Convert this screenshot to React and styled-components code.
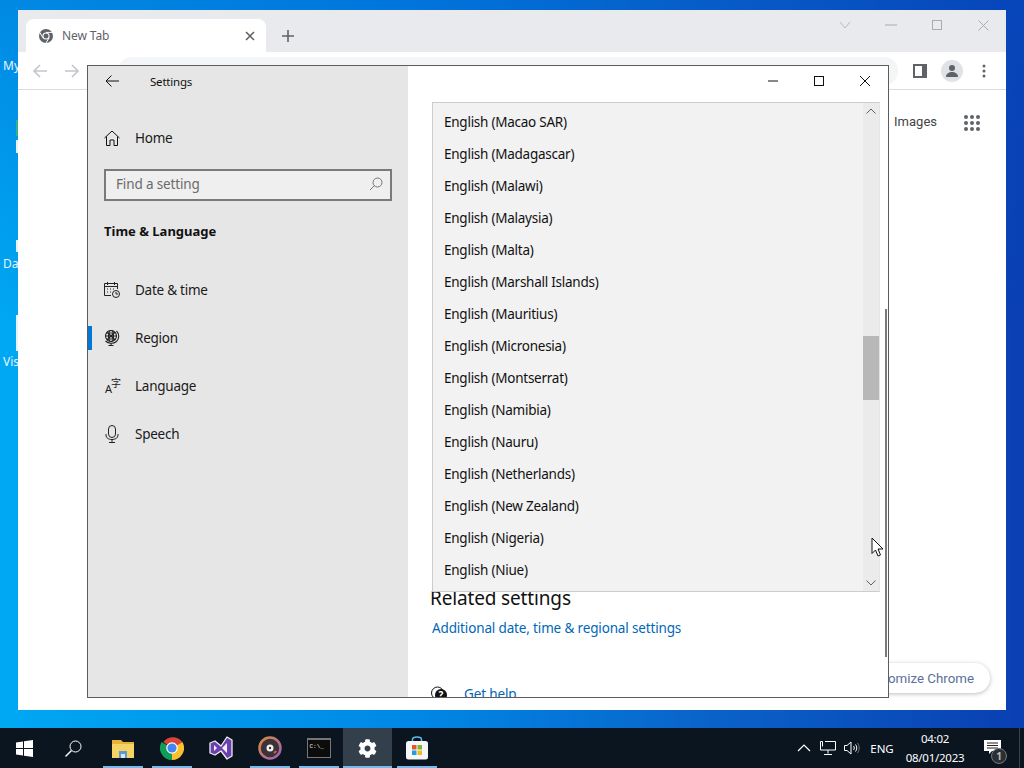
import React from 'react'
import styled, { createGlobalStyle } from 'styled-components'
import { FaCog } from 'react-icons/fa'

const UI_FONT = '"Noto Sans", "Open Sans", sans-serif'

const regions = [
    'Macao SAR', 'Madagascar', 'Malawi', 'Malaysia', 'Malta', 'Marshall Islands', 'Mauritius', 'Micronesia',
    'Montserrat', 'Namibia', 'Nauru', 'Netherlands', 'New Zealand', 'Nigeria', 'Niue',
]

function App() {
    return (
        <Screen>
            <GlobalStyle />
            <Desktop>
                <DesktopLabel $top={58}>My</DesktopLabel>
                <DesktopLabel $top={256}>Da</DesktopLabel>
                <DesktopLabel $top={354}>Vis</DesktopLabel>
                <DesktopSliver $top={120} $height={16} $color="#35b08a" />
                <DesktopSliver $top={140} $height={13} />
                <DesktopSliver $top={240} $height={12} />
                <DesktopSliver $top={315} $height={36} />

                <ChromeWindow>
                    <TabStrip>
                        <Tab>
                            <ChromeGlyph />
                            <TabTitle>New Tab</TabTitle>
                            <svg width="10" height="10" viewBox="0 0 10 10"><path d="M1 1l8 8M9 1l-8 8" stroke="#5f6368" strokeWidth="1.6" /></svg>
                        </Tab>
                        <NewTab>
                            <svg width="12" height="12" viewBox="0 0 12 12"><path d="M6 0v12M0 6h12" stroke="#5f6368" strokeWidth="1.6" /></svg>
                        </NewTab>
                        <ChromeControls>
                            <ChromeControl><svg width="12" height="8" viewBox="0 0 12 8"><path d="M1 1l5 6 5-6" fill="none" stroke="#b9bcc1" /></svg></ChromeControl>
                            <ChromeControl><svg width="12" height="2" viewBox="0 0 12 2"><path d="M0 1h12" stroke="#a9acb1" /></svg></ChromeControl>
                            <ChromeControl><svg width="10" height="10" viewBox="0 0 10 10"><rect x=".5" y=".5" width="9" height="9" fill="none" stroke="#a9acb1" /></svg></ChromeControl>
                            <ChromeControl><svg width="11" height="11" viewBox="0 0 11 11"><path d="M.5.5l10 10M10.5.5l-10 10" stroke="#a9acb1" /></svg></ChromeControl>
                        </ChromeControls>
                    </TabStrip>
                    <Toolbar>
                        <NavArrow>
                            <svg width="16" height="14" viewBox="0 0 16 14"><path d="M15 7H2M8 1L2 7l6 6" fill="none" stroke="#c4c7cb" strokeWidth="1.7" /></svg>
                        </NavArrow>
                        <NavArrow>
                            <svg width="16" height="14" viewBox="0 0 16 14"><path d="M1 7h13M8 1l6 6-6 6" fill="none" stroke="#c4c7cb" strokeWidth="1.7" /></svg>
                        </NavArrow>
                        <Omnibox />
                        <ToolButton>
                            <svg width="14" height="14" viewBox="0 0 14 14"><path fillRule="evenodd" d="M0 0h14v14H0zM2 2v10h7V2z" fill="#5f6368" /></svg>
                        </ToolButton>
                        <ToolButton>
                            <Avatar>
                                <svg width="14" height="14" viewBox="0 0 14 14"><circle cx="7" cy="4" r="3" fill="#5f6368" /><path d="M1 13c0-3.500 3-5 6-5s6 1.500 6 5z" fill="#5f6368" /></svg>
                            </Avatar>
                        </ToolButton>
                        <ToolButton>
                            <svg width="4" height="14" viewBox="0 0 4 14"><circle cx="2" cy="2" r="1.500" fill="#5f6368" /><circle cx="2" cy="7" r="1.500" fill="#5f6368" /><circle cx="2" cy="12" r="1.500" fill="#5f6368" /></svg>
                        </ToolButton>
                    </Toolbar>
                    <NewTabPage>
                        <TopLinks>
                            <TopLink>Images</TopLink>
                            <AppsGrid>
                                {Array.from({ length: 9 }).map((_, i) => <AppsDot key={i} />)}
                            </AppsGrid>
                        </TopLinks>
                        <CustomizeButton>Customize Chrome</CustomizeButton>
                    </NewTabPage>
                </ChromeWindow>

                <SettingsWindow>
                    <Sidebar>
                        <SidebarTitle>
                            <BackButton>
                                <svg width="14" height="12" viewBox="0 0 14 12"><path d="M14 6H1M6.500.5L1 6l5.500 5.500" fill="none" stroke="#111" /></svg>
                            </BackButton>
                            <span>Settings</span>
                        </SidebarTitle>
                        <HomeRow>
                            <NavIcon>
                                <svg width="16" height="16" viewBox="0 0 16 16"><path d="M.5 8L8 1l7.500 7M2.500 6.500v9h3.500V10h4v5.500h3.500v-9" fill="none" stroke="#111" /></svg>
                            </NavIcon>
                            <span>Home</span>
                        </HomeRow>
                        <SearchBox>
                            <span>Find a setting</span>
                            <svg width="14" height="14" viewBox="0 0 14 14"><circle cx="8.500" cy="5.500" r="4.500" fill="none" stroke="#777" /><path d="M5.500 8.500L1 13" stroke="#777" /></svg>
                        </SearchBox>
                        <SectionTitle>Time &amp; Language</SectionTitle>
                        <NavRow>
                            <NavIcon>
                                <svg width="16" height="16" viewBox="0 0 16 16" fill="none" stroke="#222">
                                    <path d="M7 13.500H.5V1.500h13V7M.5 4.500h13M3.500 0v3M10.500 0v3" />
                                    <path d="M3 7h1M6 7h1M9 7h1M3 10h1M6 10h1" />
                                    <circle cx="12" cy="12" r="3.500" />
                                    <path d="M12 10v2h2" />
                                </svg>
                            </NavIcon>
                            <span>Date &amp; time</span>
                        </NavRow>
                        <NavRow $active>
                            <NavIcon>
                                <svg width="16" height="16" viewBox="0 0 16 16" fill="none" stroke="#222" strokeWidth="1.1">
                                    <circle cx="7" cy="6" r="5.500" />
                                    <ellipse cx="7" cy="6" rx="2.500" ry="5.500" />
                                    <path d="M1.500 6h11M2.500 3h9M2.500 9h9M3 2l8 8M11 2l-8 8M12.500 1c3 3 3 7.500 0 10.500M1.500 11c3 3 8 3 11 .5M7 13v2.500M4.500 15.500h5" />
                                </svg>
                            </NavIcon>
                            <span>Region</span>
                        </NavRow>
                        <NavRow>
                            <NavIcon>
                                <LangA>A</LangA>
                                <LangZi>字</LangZi>
                            </NavIcon>
                            <span>Language</span>
                        </NavRow>
                        <NavRow>
                            <NavIcon>
                                <svg width="16" height="18" viewBox="0 0 16 18" fill="none" stroke="#222">
                                    <rect x="4.500" y=".5" width="7" height="12" rx="3.500" />
                                    <path d="M2 9v1c0 3 2.500 4.500 6 4.500s6-1.500 6-4.500V9M8 14.500v3M5 17.500h6" />
                                </svg>
                            </NavIcon>
                            <span>Speech</span>
                        </NavRow>
                    </Sidebar>

                    <Main>
                        <MainBar>
                            <WinButton><svg width="10" height="10" viewBox="0 0 10 10"><path d="M0 5h10" stroke="#111" /></svg></WinButton>
                            <WinButton><svg width="10" height="10" viewBox="0 0 10 10"><rect x=".5" y=".5" width="9" height="9" fill="none" stroke="#111" /></svg></WinButton>
                            <WinButton><svg width="10" height="10" viewBox="0 0 10 10"><path d="M0 0l10 10M10 0L0 10" stroke="#111" /></svg></WinButton>
                        </MainBar>
                        <RelatedTitle>Related settings</RelatedTitle>
                        <BlueLink>Additional date, time &amp; regional settings</BlueLink>
                        <HelpRow>
                            <svg width="16" height="16" viewBox="0 0 16 16"><circle cx="6.500" cy="7" r="6" fill="none" stroke="#111" /><circle cx="10" cy="9" r="6" fill="#111" /><text x="10" y="12.500" fontSize="10" fontWeight="700" textAnchor="middle" fill="#fff" fontFamily="Noto Sans">?</text></svg>
                            <BlueLink>Get help</BlueLink>
                        </HelpRow>

                        <PageScrollbar />

                        <RegionDropdown>
                            <RegionList>
                                {regions.map(name => <RegionItem key={name}>English ({name})</RegionItem>)}
                            </RegionList>
                            <ListScrollbar>
                                <ScrollArrow>
                                    <svg width="10" height="6" viewBox="0 0 10 6"><path d="M.5 5.500L5 1l4.500 4.500" fill="none" stroke="#606060" /></svg>
                                </ScrollArrow>
                                <ScrollThumb />
                                <ScrollArrow>
                                    <svg width="10" height="6" viewBox="0 0 10 6"><path d="M.5.5L5 5 9.500.5" fill="none" stroke="#606060" /></svg>
                                </ScrollArrow>
                            </ListScrollbar>
                        </RegionDropdown>
                    </Main>
                </SettingsWindow>

                <Cursor width="15" height="21" viewBox="0 0 15 21">
                    <path d="M1 1v15.500l3.500-3.500 2.500 6 2.500-1-2.500-6h5z" fill="#fff" stroke="#111" />
                </Cursor>
            </Desktop>

            <Taskbar>
                <TaskButton>
                    <svg width="17" height="17" viewBox="0 0 17 17" fill="#fff"><path d="M0 2.500l7-1V8H0zM8 1.300L17 0v8H8zM0 9h7v6.500l-7-1zM8 9h9v8l-9-1.300z" /></svg>
                </TaskButton>
                <TaskButton>
                    <svg width="17" height="17" viewBox="0 0 17 17" fill="none" stroke="#fff"><circle cx="10.500" cy="6.500" r="5.500" /><path d="M6.500 10.500L.5 16.500" strokeWidth="1.400" /></svg>
                </TaskButton>
                <TaskApp $running>
                    <svg width="22" height="19" viewBox="0 0 22 19">
                        <path d="M0 1h9l2 2h11v16H0z" fill="#e8b23a" />
                        <path d="M0 5h22v14H0z" fill="#f6d365" />
                        <path d="M7 12h8v7H7z" fill="#5a9ccf" />
                        <path d="M9 15h4v4H9z" fill="#d8e6ee" />
                    </svg>
                </TaskApp>
                <TaskApp $running>
                    <svg width="24" height="24" viewBox="0 0 24 24">
                        <path d="M12 12L3.300 6A12 12 0 0 1 22.400 6z" fill="#db4437" />
                        <path d="M12 12l10.400-6A12 12 0 0 1 12 24z" fill="#fbc02d" />
                        <path d="M12 12v12A12 12 0 0 1 1.600 6z" fill="#0f9d58" />
                        <circle cx="12" cy="12" r="5.800" fill="#fff" />
                        <circle cx="12" cy="12" r="4.600" fill="#4285f4" />
                    </svg>
                </TaskApp>
                <TaskApp>
                    <svg width="24" height="24" viewBox="0 0 24 24">
                        <path d="M1 7l5-2 6 5 6-9 5 3v16l-5 3-6-8-6 4-5-2z" fill="#6a3fb0" stroke="#eee" strokeWidth="1.300" strokeLinejoin="round" />
                        <path d="M5 9v6l3-3zM18 7l-5 5 5 5z" fill="#f3eefa" />
                    </svg>
                </TaskApp>
                <TaskApp $running>
                    <svg width="24" height="24" viewBox="0 0 24 24">
                        <defs>
                            <linearGradient id="discRing" x1="0" y1="0" x2="1" y2="1">
                                <stop offset="0" stopColor="#e08a3c" />
                                <stop offset="1" stopColor="#9a5fc0" />
                            </linearGradient>
                        </defs>
                        <circle cx="12" cy="12" r="10.500" fill="#3b3338" stroke="url(#discRing)" strokeWidth="2.500" />
                        <circle cx="12" cy="12" r="3.500" fill="#f1f1f1" />
                        <circle cx="12" cy="12" r="1.200" fill="#333" />
                        <path d="M16 17a6 6 0 0 0 2-2" stroke="#d06a3a" strokeWidth="2" fill="none" />
                    </svg>
                </TaskApp>
                <TaskApp $running>
                    <ConsoleIcon>C:\_</ConsoleIcon>
                </TaskApp>
                <TaskApp $running $active>
                    <FaCog size={19} color="#fff" />
                </TaskApp>
                <TaskApp $running>
                    <svg width="24" height="24" viewBox="0 0 24 24">
                        <path d="M7.500 6V3.500C7.500 1.500 9 1 12 1s4.500.5 4.500 2.500V6" fill="none" stroke="#62b6e6" strokeWidth="1.500" />
                        <rect x="1" y="5" width="22" height="18.500" rx="2.500" fill="#f4f6f8" />
                        <rect x="7" y="9" width="4.500" height="4.500" fill="#e8552d" />
                        <rect x="12.500" y="9" width="4.500" height="4.500" fill="#7db82c" />
                        <rect x="7" y="14.500" width="4.500" height="4.500" fill="#1f9fe0" />
                        <rect x="12.500" y="14.500" width="4.500" height="4.500" fill="#f7b916" />
                    </svg>
                </TaskApp>
                <Tray>
                    <TrayIcon>
                        <svg width="14" height="8" viewBox="0 0 14 8"><path d="M1 7l6-6 6 6" fill="none" stroke="#fff" strokeWidth="1.200" /></svg>
                    </TrayIcon>
                    <TrayIcon>
                        <svg width="16" height="14" viewBox="0 0 16 14" fill="none" stroke="#fff"><path d="M5 .5h10.500v8.500H.5V.5h2v5M8 9v3.500M4 13.500h8" /></svg>
                    </TrayIcon>
                    <TrayIcon>
                        <svg width="16" height="14" viewBox="0 0 16 14" fill="none" stroke="#fff"><path d="M.5 4.500h2.500L7 1v12L3 9.500H.5zM9.500 5c1 1 1 3 0 4M11.500 3.500c1.700 2 1.700 5 0 7" /><path d="M13.500 2c2.300 3 2.300 7 0 10" stroke="#777" /></svg>
                    </TrayIcon>
                    <TrayLang>ENG</TrayLang>
                    <Clock>
                        <span>04:02</span>
                        <span>08/01/2023</span>
                    </Clock>
                    <Notifications>
                        <svg width="17" height="14" viewBox="0 0 17 14"><path d="M0 0h17v11H8l-3 3v-3H0z" fill="#fff" /><path d="M3 3h11M3 5.500h11M3 8h11" stroke="#222" /></svg>
                        <NotifyBadge>1</NotifyBadge>
                    </Notifications>
                    <ShowDesktop />
                </Tray>
            </Taskbar>
        </Screen>
    )
}

function ChromeGlyph() {
    return (
        <svg width="14" height="14" viewBox="0 0 14 14">
            <circle cx="7" cy="7" r="7" fill="#5f6368" />
            <circle cx="7" cy="7" r="3.600" fill="#fff" />
            <circle cx="7" cy="7" r="2.500" fill="#5f6368" />
            <path d="M7 3.400h6.400M3.900 8.800L.9 3.400M10.100 8.800L7 14" stroke="#fff" strokeWidth="1" />
        </svg>
    )
}

export default App

const GlobalStyle = createGlobalStyle`
    html, body {
        margin: 0;
        padding: 0;
        overflow: hidden;
    }
`

const Screen = styled.div`
    width: 1024px;
    height: 768px;
    display: flex;
    flex-direction: column;
    overflow: hidden;
    font-family: ${UI_FONT};
`

const Desktop = styled.div`
    position: relative;
    flex: 1;
    background:
        linear-gradient(180deg, rgba(0, 80, 200, 0.35) 0, rgba(0, 80, 200, 0) 45%),
        linear-gradient(90deg, #00a8f2 0, #0088e6 40%, #0a62c8 70%, #0a3fb2 100%);
`

const DesktopLabel = styled.div`
    position: absolute;
    left: 3px;
    top: ${p => p.$top}px;
    font-size: 12px;
    line-height: 16px;
    color: #e8f6ff;
`

const DesktopSliver = styled.div`
    position: absolute;
    left: 16px;
    top: ${p => p.$top}px;
    width: 2px;
    height: ${p => p.$height}px;
    background: ${p => p.$color || '#e6f2f8'};
`

const ChromeWindow = styled.div`
    position: absolute;
    left: 18px;
    top: 10px;
    width: 988px;
    height: 700px;
    display: flex;
    flex-direction: column;
    background: #fff;
`

const TabStrip = styled.div`
    height: 42px;
    display: flex;
    align-items: flex-end;
    padding-left: 8px;
    background: #e8eaed;
`

const Tab = styled.div`
    width: 240px;
    height: 33px;
    box-sizing: border-box;
    display: flex;
    align-items: center;
    padding: 0 11px 0 13px;
    background: #fff;
    border-radius: 8px 8px 0 0;
`

const TabTitle = styled.span`
    flex: 1;
    margin-left: 9px;
    font-size: 12px;
    letter-spacing: -0.1px;
    color: #5f6368;
`

const NewTab = styled.div`
    width: 44px;
    height: 33px;
    display: flex;
    align-items: center;
    justify-content: center;
`

const ChromeControls = styled.div`
    margin-left: auto;
    align-self: flex-start;
    display: flex;
`

const ChromeControl = styled.div`
    width: 46px;
    height: 30px;
    display: flex;
    align-items: center;
    justify-content: center;
`

const Toolbar = styled.div`
    height: 38px;
    box-sizing: border-box;
    display: flex;
    align-items: center;
    padding: 0 6px;
    border-bottom: 1px solid #dadce0;
`

const NavArrow = styled.div`
    width: 32px;
    display: flex;
    justify-content: center;
`

const Omnibox = styled.div`
    flex: 1;
    height: 28px;
    margin: 0 6px 0 30px;
    border-radius: 14px;
    background: #f4f5f6;
`

const ToolButton = styled.div`
    width: 32px;
    height: 32px;
    display: flex;
    align-items: center;
    justify-content: center;
`

const Avatar = styled.div`
    width: 22px;
    height: 22px;
    border-radius: 50%;
    background: #e0e2e6;
    display: flex;
    align-items: center;
    justify-content: center;
`

const NewTabPage = styled.div`
    flex: 1;
    display: flex;
    flex-direction: column;
    justify-content: space-between;
    align-items: flex-end;
    padding: 24px 16px 17px 0;
`

const TopLinks = styled.div`
    display: flex;
    align-items: center;
    gap: 27px;
    padding-right: 10px;
`

const TopLink = styled.span`
    padding-bottom: 2px;
    font-family: "Roboto", sans-serif;
    font-size: 13px;
    color: #444;
`

const AppsGrid = styled.div`
    display: grid;
    grid-template-columns: repeat(3, 4px);
    gap: 2px;
`

const AppsDot = styled.span`
    width: 4px;
    height: 4px;
    border-radius: 50%;
    background: #5f6368;
`

const CustomizeButton = styled.div`
    height: 30px;
    display: flex;
    align-items: center;
    padding: 0 16px;
    border-radius: 15px;
    background: #fff;
    box-shadow: 0 1px 4px rgba(60, 64, 67, 0.35);
    font-family: "Roboto", sans-serif;
    font-size: 13.3px;
    color: #5b6f9c;
`

const SettingsWindow = styled.div`
    position: absolute;
    left: 87px;
    top: 65px;
    width: 802px;
    height: 633px;
    box-sizing: border-box;
    display: flex;
    overflow: hidden;
    background: #fff;
    border: 1px solid #5c5c5c;
`

const Sidebar = styled.div`
    width: 320px;
    display: flex;
    flex-direction: column;
    background: #e6e6e6;
    color: #111;
`

const SidebarTitle = styled.div`
    height: 32px;
    box-sizing: border-box;
    padding-bottom: 2px;
    display: flex;
    align-items: center;
    font-size: 11.5px;
    letter-spacing: -0.2px;
`

const BackButton = styled.div`
    width: 62px;
    padding-left: 17px;
    box-sizing: border-box;
    display: flex;
`

const NavRow = styled.div`
    position: relative;
    height: 48px;
    box-sizing: border-box;
    display: flex;
    align-items: center;
    padding-left: 16px;
    font-size: 13.5px;
    letter-spacing: -0.25px;
    color: #1a1a1a;

    ${p => p.$active && `
        &::before {
            content: '';
            position: absolute;
            left: 0;
            top: 12px;
            width: 4px;
            height: 24px;
            background: #0078d7;
        }
    `}
`

const HomeRow = styled(NavRow)`
    margin-top: 16px;
`

const NavIcon = styled.div`
    position: relative;
    width: 31px;
    height: 18px;
    display: flex;
    align-items: center;
`

const LangA = styled.span`
    position: absolute;
    left: 1px;
    top: 6px;
    font-size: 11px;
    line-height: 12px;
`

const LangZi = styled.span`
    position: absolute;
    left: 7px;
    top: 0;
    font-family: "Noto Sans CJK SC", sans-serif;
    font-size: 10px;
    line-height: 11px;
`

const SearchBox = styled.div`
    height: 32px;
    margin: 7px 16px 0;
    box-sizing: border-box;
    display: flex;
    align-items: center;
    justify-content: space-between;
    padding: 0 7px 2px 10px;
    border: 2px solid #7a7a7a;
    background: #efefef;
    font-size: 13.5px;
    letter-spacing: -0.15px;
    color: #6b6b6b;
`

const SectionTitle = styled.div`
    height: 30px;
    margin: 15px 16px 20px;
    display: flex;
    align-items: center;
    font-size: 13px;
    font-weight: 700;
`

const Main = styled.div`
    position: relative;
    flex: 1;
    display: flex;
    flex-direction: column;
    padding-left: 23px;
    color: #111;
`

const MainBar = styled.div`
    height: 32px;
    flex-shrink: 0;
    display: flex;
    justify-content: flex-end;
`

const WinButton = styled.div`
    width: 46px;
    height: 30px;
    display: flex;
    align-items: center;
    justify-content: center;
`

const RelatedTitle = styled.div`
    margin: 486px 0 0 -1px;
    font-size: 19px;
    letter-spacing: -0.15px;
    line-height: 28px;
`

const BlueLink = styled.div`
    margin-top: 6px;
    margin-left: 1px;
    font-size: 13.5px;
    letter-spacing: -0.15px;
    line-height: 20px;
    color: #0067b8;
`

const HelpRow = styled.div`
    margin-top: 46px;
    display: flex;
    align-items: center;
    gap: 17px;

    ${BlueLink} {
        margin: 0;
    }
`

const PageScrollbar = styled.div`
    position: absolute;
    right: 1px;
    top: 243px;
    width: 2px;
    height: 348px;
    background: #7a7a7a;
`

const RegionDropdown = styled.div`
    position: absolute;
    left: 24px;
    top: 36px;
    width: 448px;
    height: 490px;
    box-sizing: border-box;
    display: flex;
    background: #f2f2f2;
    border: 1px solid #cccccc;
    border-right-color: #e4e4e4;
`

const RegionList = styled.div`
    flex: 1;
    padding-top: 3px;
    overflow: hidden;
`

const RegionItem = styled.div`
    height: 32px;
    display: flex;
    align-items: center;
    padding-left: 11px;
    font-size: 13.5px;
    letter-spacing: -0.25px;
    color: #111;
`

const ListScrollbar = styled.div`
    position: relative;
    width: 16px;
    display: flex;
    flex-direction: column;
    justify-content: space-between;
    background: #ebebeb;
`

const ScrollArrow = styled.div`
    height: 16px;
    display: flex;
    align-items: center;
    justify-content: center;
`

const ScrollThumb = styled.div`
    position: absolute;
    left: 0;
    top: 233px;
    width: 16px;
    height: 64px;
    background: #b8b8b8;
`

const Cursor = styled.svg`
    position: absolute;
    left: 871px;
    top: 537px;
`

const Taskbar = styled.div`
    height: 40px;
    flex-shrink: 0;
    display: flex;
    background: #0b1520;
    color: #fff;
`

const TaskButton = styled.div`
    width: 49px;
    display: flex;
    align-items: center;
    justify-content: center;
`

const TaskApp = styled.div`
    position: relative;
    width: 49px;
    display: flex;
    align-items: center;
    justify-content: center;
    background: ${p => (p.$active ? '#33404c' : 'transparent')};

    ${p => p.$running && `
        &::after {
            content: '';
            position: absolute;
            left: ${p.$active ? 0 : 5}px;
            right: ${p.$active ? 0 : 4}px;
            bottom: 0;
            height: 2px;
            background: #76b9ed;
        }
    `}
`

const ConsoleIcon = styled.div`
    width: 24px;
    height: 20px;
    box-sizing: border-box;
    padding: 3px 0 0 2px;
    background: #0c0c0c;
    border: 1px solid #777;
    border-top-width: 2px;
    font-family: "Liberation Mono", monospace;
    font-size: 6px;
    line-height: 8px;
    color: #eee;
`

const Tray = styled.div`
    margin-left: auto;
    display: flex;
    align-items: center;
`

const TrayIcon = styled.div`
    width: 24px;
    display: flex;
    justify-content: center;
`

const TrayLang = styled.div`
    width: 36px;
    text-align: center;
    font-size: 11.5px;
`

const Clock = styled.div`
    width: 70px;
    display: flex;
    flex-direction: column;
    align-items: center;
    font-size: 11.5px;
    letter-spacing: -0.25px;
    line-height: 19px;
`

const Notifications = styled.div`
    position: relative;
    align-self: stretch;
    width: 45px;
    box-sizing: border-box;
    padding-bottom: 3px;
    display: flex;
    align-items: center;
    justify-content: center;
`

const NotifyBadge = styled.span`
    position: absolute;
    left: 21px;
    top: 20px;
    width: 16px;
    height: 16px;
    box-sizing: border-box;
    border: 1px solid #777;
    border-radius: 50%;
    background: #2a2f35;
    color: #bbb;
    font-size: 10px;
    font-weight: 700;
    line-height: 14px;
    text-align: center;
`

const ShowDesktop = styled.div`
    align-self: stretch;
    width: 9px;
    box-sizing: border-box;
    padding-left: 4px;

    &::before {
        content: '';
        display: block;
        width: 1px;
        height: 100%;
        background: #3a444e;
    }
`
